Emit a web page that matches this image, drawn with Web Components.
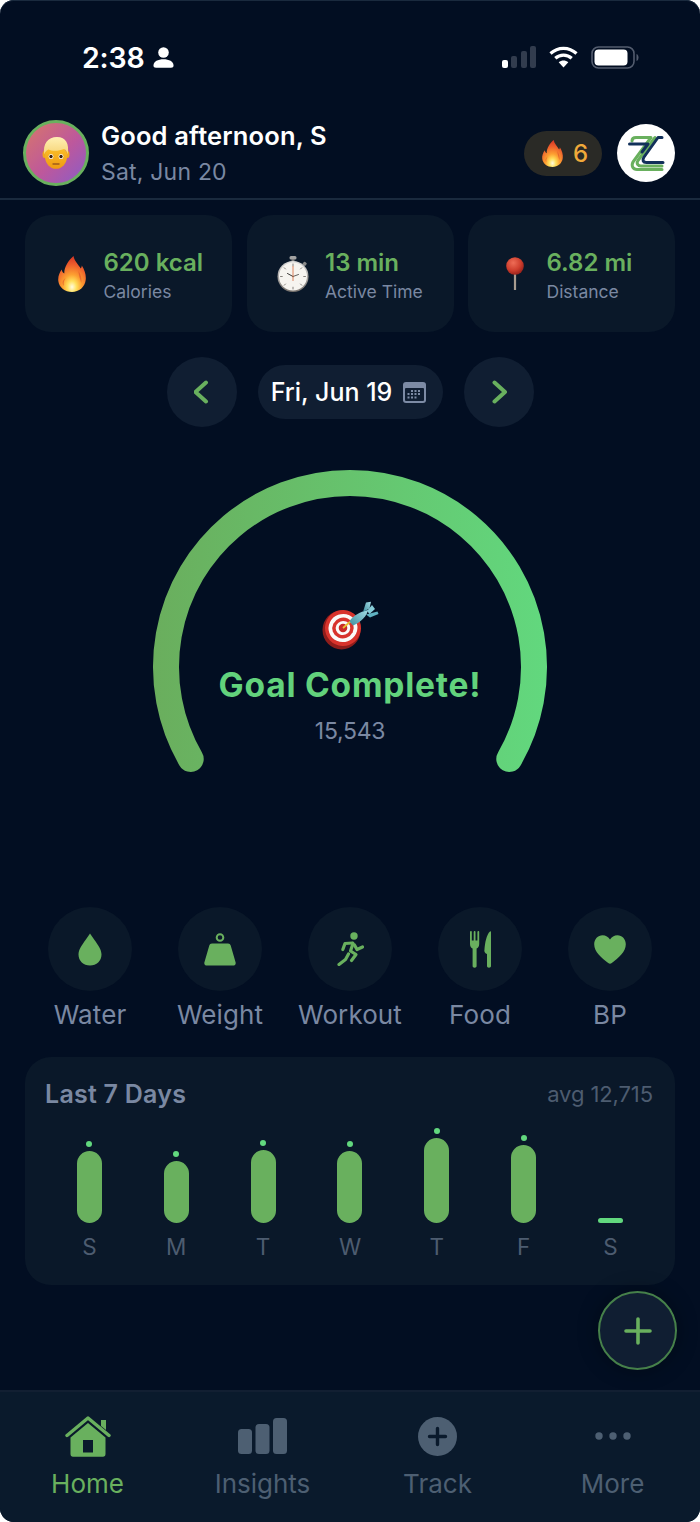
<!DOCTYPE html>
<html lang="en">
<head>
<meta charset="utf-8">
<title>Home</title>
<style>
    html, body { margin: 0; padding: 0; background: #ffffff; }
    body { font-family: "Inter", "Liberation Sans", sans-serif; width: 700px; height: 1522px; overflow: hidden; }
</style>
</head>
<body>
<app-shell>
    <status-bar></status-bar>
    <app-header name="Good afternoon, S" date="Sat, Jun 20" streak="6"></app-header>
    <stat-row>
        <stat-card icon="flame" value="620 kcal" label="Calories"></stat-card>
        <stat-card icon="stopwatch" value="13 min" label="Active Time"></stat-card>
        <stat-card icon="pin" value="6.82 mi" label="Distance"></stat-card>
    </stat-row>
    <date-nav date="Fri, Jun 19"></date-nav>
    <goal-gauge title="Goal Complete!" value="15,543"></goal-gauge>
    <action-row>
        <quick-action icon="water" label="Water"></quick-action>
        <quick-action icon="weight" label="Weight"></quick-action>
        <quick-action icon="workout" label="Workout"></quick-action>
        <quick-action icon="food" label="Food"></quick-action>
        <quick-action icon="heart" label="BP"></quick-action>
    </action-row>
    <week-chart avg="avg 12,715"></week-chart>
    <fab-button></fab-button>
    <bottom-nav>
        <nav-item icon="home" label="Home" active></nav-item>
        <nav-item icon="insights" label="Insights"></nav-item>
        <nav-item icon="track" label="Track"></nav-item>
        <nav-item icon="more" label="More"></nav-item>
    </bottom-nav>
</app-shell>

<script>
// Colour emoji are not installed, so these are drawn by hand
const EMOJI = {
    flame: `<svg viewBox="0 0 28 36" width="100%" height="100%">
        <defs>
            <radialGradient id="fl" cx="50%" cy="86%" r="82%">
                <stop offset="0" stop-color="#fffbe0"/><stop offset=".2" stop-color="#ffe05c"/>
                <stop offset=".42" stop-color="#fda031"/><stop offset=".75" stop-color="#ee5f2c"/><stop offset="1" stop-color="#d93a26"/>
            </radialGradient>
        </defs>
        <path fill="url(#fl)" d="M15.500 0C16.500 5.500 20.500 8.500 22.800 12.500C23.500 11.500 23.800 10.500 23.800 9.500C26.800 14 28.300 19.500 27.700 24C27 31 21 36 14 36C7 36 1 31.500 .3 25C-.2 20.500 1.500 16.500 3.800 13.500C4 15.500 4.800 16.800 6.300 17.500C6 11 10.500 4.500 15.500 0Z"/>
        <path fill="#d8402a" opacity=".5" d="M20.500 15C23 19 24 23 23.300 27C22 23 20.800 19.500 20.500 15ZM7.500 22C5.800 24.500 5.300 27 6 30C3.800 27.500 4.300 24.500 7.500 22Z"/>
    </svg>`,
    stopwatch: `<svg viewBox="0 0 32 36" width="100%" height="100%">
        <defs>
            <linearGradient id="sw" x1="0" y1="0" x2="0" y2="1"><stop offset="0" stop-color="#dedede"/><stop offset="1" stop-color="#77716c"/></linearGradient>
        </defs>
        <rect x="12.500" y="0" width="7" height="3.500" rx="1.500" fill="#a2a2a2"/>
        <rect x="14.500" y="3" width="3" height="3" fill="#808080"/>
        <rect x="26" y="6" width="3.500" height="3.500" rx="1" fill="#8a8a8a" transform="rotate(40 27.700 7.700)"/>
        <circle cx="16" cy="20.500" r="15.500" fill="url(#sw)"/>
        <circle cx="16" cy="20.500" r="14" fill="#f6f4f0"/>
        <g stroke="#6a6560" stroke-width=".8" stroke-linecap="round">
            <path d="M16 8v1.800M16 31.200v1.800M3.500 20.500h1.800M26.700 20.500h1.800M7.200 11.700l1.300 1.300M23.500 28l1.300 1.300M24.800 11.700l-1.300 1.300M8.500 28l-1.300 1.300"/>
        </g>
        <path d="M16 20.500L10.500 17.500" stroke="#3c3a38" stroke-width="1" stroke-linecap="round"/>
        <path d="M16 20.500L21.500 18.500" stroke="#3c3a38" stroke-width=".8" stroke-linecap="round"/>
        <path d="M16 25V10" stroke="#d8683a" stroke-width=".8"/>
    </svg>`,
    pin: `<svg viewBox="0 0 18 33" width="100%" height="100%">
        <defs>
            <radialGradient id="pn" cx="40%" cy="32%" r="70%"><stop offset="0" stop-color="#ee6c56"/><stop offset=".6" stop-color="#cf3f2e"/><stop offset="1" stop-color="#97201a"/></radialGradient>
        </defs>
        <rect x="7.900" y="15" width="2.200" height="18" fill="#a89c90"/>
        <circle cx="9" cy="9" r="8.800" fill="url(#pn)"/>
    </svg>`,
    dart: `<svg viewBox="0 0 57 49" width="100%" height="100%">
        <defs>
            <linearGradient id="dt" x1="0" y1="1" x2="1" y2="0"><stop offset="0" stop-color="#3f8fa0"/><stop offset="1" stop-color="#a4dde6"/></linearGradient>
        </defs>
        <ellipse cx="19.500" cy="29" rx="19" ry="19.500" fill="#8f1d1b"/>
        <ellipse cx="21" cy="27" rx="18" ry="18" fill="#d8332c" transform="rotate(-20 21 27)"/>
        <ellipse cx="21" cy="27" rx="14.500" ry="14" fill="#fbfaf8" transform="rotate(-20 21 27)"/>
        <ellipse cx="21" cy="27" rx="10.800" ry="10.300" fill="#d8332c" transform="rotate(-20 21 27)"/>
        <ellipse cx="21" cy="27" rx="7.300" ry="7" fill="#fbfaf8" transform="rotate(-20 21 27)"/>
        <ellipse cx="21" cy="27" rx="4.300" ry="4.200" fill="#c92a26"/>
        <path d="M21 27L29 20" stroke="#e8c030" stroke-width="1.800"/>
        <path d="M27.500 20.500C30 15 38 11 46 9C45 14.500 40 20.500 31 24.500Z" fill="url(#dt)"/>
        <path d="M41 11L44 1.500L49 .8L47.500 7.500Z" fill="url(#dt)"/>
        <path d="M44 13.500L55.500 10.500L56.500 13L48 16.500Z" fill="#5fb2c2"/>
        <path d="M45 10L50 4L53 8L47.500 13Z" fill="#87cdd9"/>
    </svg>`,
    boy: `<svg viewBox="0 0 28 32" width="100%" height="100%">
        <defs>
            <linearGradient id="by" x1="0" y1="0" x2="0" y2="1"><stop offset="0" stop-color="#fcc52e"/><stop offset="1" stop-color="#ef9a12"/></linearGradient>
            <linearGradient id="hr" x1="0" y1="0" x2="0" y2="1"><stop offset="0" stop-color="#fff0b4"/><stop offset="1" stop-color="#f6d476"/></linearGradient>
        </defs>
        <rect x=".6" y="14" width="4.400" height="7" rx="2.200" fill="#f0a81e"/>
        <rect x="23" y="14" width="4.400" height="7" rx="2.200" fill="#f0a81e"/>
        <ellipse cx="14" cy="19.500" rx="11" ry="12.300" fill="url(#by)"/>
        <path d="M2.300 17.500C.5 7 6 0 15 0C24 0 27.500 7 25.700 17.500C25 14.500 24 13 22 12C16 14.500 9.500 14 6.500 12.500C4.500 13.500 3 15 2.300 17.500Z" fill="url(#hr)"/>
        <ellipse cx="9" cy="19.500" rx="2.400" ry="2.500" fill="#fff"/><ellipse cx="19" cy="19.500" rx="2.400" ry="2.500" fill="#fff"/>
        <circle cx="9" cy="19.500" r="1.700" fill="#3e2410"/><circle cx="19" cy="19.500" r="1.700" fill="#3e2410"/>
        <path d="M11 27h6" stroke="#a05c18" stroke-width="1.300" stroke-linecap="round"/>
    </svg>`
};

const GREEN = '#69b05e';
const MUTED = '#7a88a2';

const ICONS = {
    water: `<svg width="24" height="33" viewBox="0 0 24 33"><path fill="${GREEN}" d="M12 0.500C13 2 14.500 4 16.500 7C20 12 23.500 16.500 23.500 21.500C23.500 28 18.500 32.500 12 32.500C5.500 32.500 .5 28 .5 21.500C.5 16.500 4 12 7.500 7C9.500 4 11 2 12 .5Z"/></svg>`,
    weight: `<svg width="32" height="33" viewBox="0 0 32 33"><circle cx="16" cy="4.500" r="3.300" fill="none" stroke="${GREEN}" stroke-width="2"/><path fill="${GREEN}" d="M8 10.500H24C25.500 10.500 26.300 11.200 26.700 12.500L31.500 29C32.200 31.200 31 32.500 29 32.500H3C1 32.500 -.2 31.200 .5 29L5.300 12.500C5.700 11.200 6.500 10.500 8 10.500Z"/></svg>`,
    workout: `<svg width="27" height="34" viewBox="0 0 27 34"><circle cx="17" cy="4" r="3.700" fill="${GREEN}"/><g fill="none" stroke="${GREEN}" stroke-width="3.200" stroke-linecap="round" stroke-linejoin="round"><path d="M15.500 11L8 11.500L5.800 17.500"/><path d="M16 11.500L13.500 19L19 22.500L14.500 28.500"/><path d="M17.500 13L20 17.500L25.500 15"/><path d="M11.500 22L8.500 27.500L2 32.500"/></g></svg>`,
    food: `<svg width="23" height="37" viewBox="0 0 23 37"><g fill="${GREEN}"><path d="M1 1C1 .4 1.400 0 1.900 0S2.800 .4 2.800 1V9.500H4.700V1C4.700 .4 5.100 0 5.600 0S6.500 .4 6.500 1V9.500H8.400V1C8.400 .4 8.800 0 9.300 0S10.200 .4 10.200 1V13C10.200 15.500 9 17 7.600 17.600V35C7.600 36 6.800 36.700 5.600 36.700S3.600 36 3.600 35V17.600C2.200 17 1 15.500 1 13Z"/><path d="M22 1V35C22 36 21.200 36.700 20 36.700S18 36 18 35V23C15.500 22 15 20.500 15.500 18C16 12 17.500 3.500 21 .5C21.500 0 22 .4 22 1Z"/></g></svg>`,
    heart: `<svg width="32" height="29" viewBox="0 0 32 29"><path fill="${GREEN}" d="M16 28.800C15.400 28.800 14.900 28.500 14.200 28C7.500 23 .2 17 .2 9.300C.2 4 3.900 .2 8.600 .2C11.800 .2 14.400 1.800 16 4.600C17.600 1.800 20.200 .2 23.400 .2C28.100 .2 31.800 4 31.800 9.300C31.800 17 24.500 23 17.800 28C17.100 28.500 16.600 28.800 16 28.800Z"/></svg>`,
    home: `<svg width="46" height="41" viewBox="0 0 46 41"><path fill="none" stroke="currentColor" stroke-width="3.400" stroke-linecap="round" stroke-linejoin="round" d="M2 19.500L23 2L44 19.500"/><path fill="currentColor" d="M36 4H41V14L36 10Z"/><path fill="currentColor" fill-rule="evenodd" d="M23 7L40.500 21.500V38C40.500 39.700 39.500 40.700 38 40.700H8C6.500 40.700 5.500 39.700 5.500 38V21.500ZM18 24V36.500H28V24Z"/></svg>`,
    insights: `<svg width="49" height="36" viewBox="0 0 49 36"><g fill="currentColor"><rect x="0" y="11" width="14" height="25" rx="3.500"/><rect x="17.500" y="6" width="14" height="30" rx="3.500"/><rect x="35" y="0" width="14" height="36" rx="3.500"/></g></svg>`,
    track: `<svg width="39" height="39" viewBox="0 0 39 39"><circle cx="19.500" cy="19.500" r="19.500" fill="currentColor"/><path d="M19.500 11.500V27.500M11.500 19.500H27.500" stroke="#0a1a2c" stroke-width="3.400" stroke-linecap="round"/></svg>`,
    more: `<svg width="36" height="8" viewBox="0 0 36 8"><g fill="currentColor"><circle cx="4" cy="4" r="3.700"/><circle cx="18" cy="4" r="3.700"/><circle cx="32" cy="4" r="3.700"/></g></svg>`
};

class AppShell extends HTMLElement {
    constructor() {
        super();
        this.attachShadow({ mode: 'open' });
        this.shadowRoot.innerHTML = `
            <style>
                :host {
                    display: flex;
                    flex-direction: column;
                    position: relative;
                    width: 700px;
                    height: 1522px;
                    background: #020e22;
                    border-radius: 14px;
                    overflow: hidden;
                    box-shadow: inset 0 1px 0 #1a2a3e;
                    color: #fff;
                }
            </style>
            <slot></slot>
        `;
    }
}

class StatusBar extends HTMLElement {
    constructor() {
        super();
        this.attachShadow({ mode: 'open' });
        this.shadowRoot.innerHTML = `
            <style>
                :host {
                    display: flex;
                    align-items: center;
                    justify-content: space-between;
                    height: 114px;
                    padding: 0 61px 0 82px;
                    box-sizing: border-box;
                }
                .left, .right { display: flex; align-items: center; }
                .left { gap: 9px; }
                .right { gap: 13px; }
                .time { font-size: 28.500px; font-weight: 600; letter-spacing: -.2px; }
                .signal { display: flex; align-items: flex-end; gap: 3.500px; height: 22px; }
                .signal i { display: block; width: 6px; border-radius: 2px; background: #323c4e; }
            </style>
            <div class="left">
                <span class="time">2:38</span>
                <svg width="21" height="21" viewBox="0 0 21 21"><circle cx="10.500" cy="5.500" r="5.300" fill="#fff"/><path fill="#fff" d="M.5 18.500C.5 14.500 5 12.300 10.500 12.300S20.500 14.500 20.500 18.500C20.500 20 19.700 20.700 18 20.700H3C1.300 20.700 .5 20 .5 18.500Z"/></svg>
            </div>
            <div class="right">
                <div class="signal">
                    <i style="height:8px;background:#fff"></i><i style="height:12px"></i><i style="height:17px"></i><i style="height:22px"></i>
                </div>
                <svg width="29" height="22" viewBox="0 0 29 22"><g fill="none" stroke="#fff" stroke-width="3.200"><path d="M1.500 7.500C9 .6 20 .6 27.500 7.500"/><path d="M6.300 12.300C11 8 18 8 22.700 12.300"/></g><path fill="#fff" d="M14.500 21.500L9.700 16.300C12.500 13.800 16.500 13.800 19.300 16.300Z"/></svg>
                <svg width="48" height="23" viewBox="0 0 48 23"><rect x="1" y="1" width="42" height="21" rx="6.500" fill="none" stroke="#535c6e" stroke-width="1.600"/><rect x="3.500" y="3.500" width="33" height="16" rx="4" fill="#fff"/><path d="M45.500 8C47 8.500 47.500 10 47.500 11.500S47 14.500 45.500 15Z" fill="#535c6e"/></svg>
            </div>
        `;
    }
}

class AppHeader extends HTMLElement {
    constructor() {
        super();
        this.attachShadow({ mode: 'open' });
    }

    connectedCallback() {
        this.shadowRoot.innerHTML = `
            <style>
                :host {
                    display: flex;
                    align-items: center;
                    height: 86px;
                    padding: 0 25px 6px 23px;
                    box-sizing: border-box;
                    border-bottom: 2px solid #1a2a3e;
                }
                .avatar {
                    width: 66px;
                    height: 66px;
                    box-sizing: border-box;
                    border: 3px solid #69b05e;
                    border-radius: 50%;
                    background: linear-gradient(135deg, #d8766a 0%, #bd589c 55%, #8a5cc8 100%);
                    display: grid;
                    place-items: center;
                    margin-right: 12px;
                }
                .avatar span { display: block; width: 28px; height: 32px; }
                .text { flex: 1; margin-top: 2px; }
                .name { font-size: 25.500px; font-weight: 600; line-height: 32px; letter-spacing: .15px; white-space: nowrap; }
                .date { font-size: 23px; line-height: 32px; color: ${MUTED}; letter-spacing: .2px; margin-top: 4px; }
                .streak {
                    display: flex;
                    align-items: center;
                    gap: 9px;
                    height: 45px;
                    width: 78px;
                    padding-left: 17px;
                    box-sizing: border-box;
                    border-radius: 23px;
                    background: #2a2a26;
                    color: #f0a93a;
                    font-size: 24px;
                    font-weight: 500;
                    margin-right: 15px;
                }
                .streak span { display: block; width: 23px; height: 27px; }
                .logo {
                    width: 58px;
                    height: 58px;
                    border-radius: 50%;
                    background: #fff;
                    display: grid;
                    place-items: center;
                }
            </style>
            <div class="avatar"><span>${EMOJI.boy}</span></div>
            <div class="text">
                <div class="name">${this.getAttribute('name')}</div>
                <div class="date">${this.getAttribute('date')}</div>
            </div>
            <div class="streak"><span>${EMOJI.flame.replace(/fl\b/g, 'fl2')}</span>${this.getAttribute('streak')}</div>
            <div class="logo">
                <svg width="40" height="40" viewBox="0 0 40 40" fill="none" stroke-linejoin="round" stroke-linecap="round">
                    <path stroke="#69b05e" stroke-width="3" d="M6 8C6 5.500 7.500 4.500 10 4.500H25L7 29C5 33 7 36.500 11 36.500H36"/>
                    <path stroke="#69b05e" stroke-width="3" d="M29 4.500L12 27.500C10 30.500 12 33 15 33H36"/>
                    <path stroke="#12305a" stroke-width="3" d="M3.500 11H22L16 19"/>
                    <path stroke="#12305a" stroke-width="3" d="M36 4.500H32L18 24C16 27 17 29.500 20.500 29.500H37"/>
                </svg>
            </div>
        `;
    }
}

class StatRow extends HTMLElement {
    constructor() {
        super();
        this.attachShadow({ mode: 'open' });
        this.shadowRoot.innerHTML = `
            <style>
                :host {
                    display: grid;
                    grid-template-columns: repeat(3, 207px);
                    justify-content: space-between;
                    padding: 15px 25px 0;
                }
            </style>
            <slot></slot>
        `;
    }
}

const STAT_SIZES = { flame: [28, 36], stopwatch: [32, 36], pin: [18, 33] };

class StatCard extends HTMLElement {
    constructor() {
        super();
        this.attachShadow({ mode: 'open' });
    }

    connectedCallback() {
        const icon = this.getAttribute('icon');
        const [w, h] = STAT_SIZES[icon];
        this.shadowRoot.innerHTML = `
            <style>
                :host {
                    display: flex;
                    align-items: center;
                    gap: 14px;
                    height: 117px;
                    background: #0a1829;
                    border-radius: 26px;
                    padding: 4px 0 0 28.500px;
                    box-sizing: border-box;
                }
                .box { width: 36px; display: grid; place-items: center; margin-top: -4px; }
                .icon { display: block; width: ${w}px; height: ${h}px; }
                .value { font-size: 24px; font-weight: 600; color: #69b05e; line-height: 30px; white-space: nowrap; }
                .label { font-size: 17.500px; color: ${MUTED}; line-height: 24px; margin-top: 2px; white-space: nowrap; }
            </style>
            <div class="box"><span class="icon">${EMOJI[icon]}</span></div>
            <div>
                <div class="value">${this.getAttribute('value')}</div>
                <div class="label">${this.getAttribute('label')}</div>
            </div>
        `;
    }
}

class DateNav extends HTMLElement {
    constructor() {
        super();
        this.attachShadow({ mode: 'open' });
    }

    connectedCallback() {
        this.shadowRoot.innerHTML = `
            <style>
                :host {
                    display: flex;
                    align-items: center;
                    justify-content: center;
                    gap: 21px;
                    padding-top: 25px;
                }
                .arrow {
                    width: 70px;
                    height: 70px;
                    border-radius: 50%;
                    background: #101e32;
                    display: grid;
                    place-items: center;
                }
                .pill {
                    display: flex;
                    align-items: center;
                    justify-content: center;
                    gap: 11px;
                    width: 185px;
                    height: 54px;
                    padding-right: 3px;
                    box-sizing: border-box;
                    border-radius: 27px;
                    background: #101e32;
                    font-size: 25px;
                    font-weight: 500;
                    white-space: nowrap;
                }
            </style>
            <div class="arrow"><svg width="16" height="24" viewBox="0 0 16 24"><path d="M12 2.500L1.500 12L12 21.500" fill="none" stroke="#69b05e" stroke-width="4" stroke-linecap="round" stroke-linejoin="round"/></svg></div>
            <div class="pill">
                ${this.getAttribute('date')}
                <svg width="23" height="21" viewBox="0 0 23 21"><rect width="23" height="21" rx="3" fill="#7d8ba5"/><rect x="2" y="6" width="19" height="13" rx="1" fill="#101e32"/><g fill="#7d8ba5"><path d="M8 8h2v2H8zM11.500 8h2v2h-2zM15 8h2v2h-2zM4.500 11h2v2h-2zM8 11h2v2H8zM11.500 11h2v2h-2zM15 11h2v2h-2zM4.500 14.500h2v2h-2zM8 14.500h2v2H8zM11.500 14.500h2v2h-2z"/></g></svg>
            </div>
            <div class="arrow"><svg width="16" height="24" viewBox="0 0 16 24"><path d="M3.500 2.500L14 12L3.500 21.500" fill="none" stroke="#69b05e" stroke-width="4" stroke-linecap="round" stroke-linejoin="round"/></svg></div>
        `;
    }
}

class GoalGauge extends HTMLElement {
    constructor() {
        super();
        this.attachShadow({ mode: 'open' });
    }

    connectedCallback() {
        this.shadowRoot.innerHTML = `
            <style>
                :host {
                    display: grid;
                    justify-content: center;
                    margin-top: 43px;
                }
                svg.arc, .center { grid-area: 1 / 1; }
                svg.arc { display: block; overflow: visible; }
                .center {
                    display: flex;
                    flex-direction: column;
                    align-items: center;
                    padding-top: 131px;
                }
                .dart { display: block; width: 57px; height: 49px; }
                .title { font-size: 33.500px; font-weight: 700; color: #62d27c; line-height: 40px; margin-top: 15px; letter-spacing: .8px; white-space: nowrap; }
                .value { font-size: 23px; color: ${MUTED}; line-height: 30px; margin-top: 11px; letter-spacing: -.3px; }
            </style>
            <svg class="arc" width="394" height="420" viewBox="0 0 394 420">
                <defs>
                    <linearGradient id="arc" gradientUnits="userSpaceOnUse" x1="0" y1="0" x2="394" y2="0">
                        <stop offset="0" stop-color="#6aae5d"/>
                        <stop offset="1" stop-color="#62d87e"/>
                    </linearGradient>
                </defs>
                <path d="M37.700 289A184 184 0 1 1 356.300 289" fill="none" stroke="url(#arc)" stroke-width="26" stroke-linecap="round"/>
            </svg>
            <div class="center">
                <span class="dart">${EMOJI.dart}</span>
                <div class="title">${this.getAttribute('title')}</div>
                <div class="value">${this.getAttribute('value')}</div>
            </div>
        `;
    }
}

class ActionRow extends HTMLElement {
    constructor() {
        super();
        this.attachShadow({ mode: 'open' });
        this.shadowRoot.innerHTML = `
            <style>
                :host {
                    display: grid;
                    grid-template-columns: repeat(5, 130px);
                    padding: 17px 25px 0;
                }
            </style>
            <slot></slot>
        `;
    }
}

class QuickAction extends HTMLElement {
    constructor() {
        super();
        this.attachShadow({ mode: 'open' });
    }

    connectedCallback() {
        this.shadowRoot.innerHTML = `
            <style>
                :host {
                    display: flex;
                    flex-direction: column;
                    align-items: center;
                    gap: 8px;
                }
                .circle {
                    width: 84px;
                    height: 84px;
                    border-radius: 50%;
                    background: #0a1829;
                    display: grid;
                    place-items: center;
                }
                .label { font-size: 26px; line-height: 32px; color: ${MUTED}; letter-spacing: .1px; white-space: nowrap; }
            </style>
            <div class="circle">${ICONS[this.getAttribute('icon')]}</div>
            <div class="label">${this.getAttribute('label')}</div>
        `;
    }
}

const WEEK = [
    { day: 'S', h: 72 },
    { day: 'M', h: 62 },
    { day: 'T', h: 73 },
    { day: 'W', h: 72 },
    { day: 'T', h: 85 },
    { day: 'F', h: 78 },
    { day: 'S', h: 0 }
];

class WeekChart extends HTMLElement {
    constructor() {
        super();
        this.attachShadow({ mode: 'open' });
    }

    connectedCallback() {
        const cols = WEEK.map((d) => `
            <div class="col">
                <div class="plot">
                    ${d.h ? `<i class="dot"></i><i class="bar" style="height:${d.h}px"></i>` : '<i class="dash"></i>'}
                </div>
                <div class="day">${d.day}</div>
            </div>
        `).join('');
        this.shadowRoot.innerHTML = `
            <style>
                :host {
                    display: block;
                    margin: 26px 25px 0;
                    height: 228px;
                    padding: 20px 21px 0;
                    box-sizing: border-box;
                    background: #0a1829;
                    border-radius: 26px;
                }
                .head { display: flex; justify-content: space-between; align-items: center; height: 34px; }
                .title { font-size: 25px; font-weight: 600; color: ${MUTED}; letter-spacing: .25px; margin-left: -1px; }
                .avg { font-size: 22px; color: #4d5c70; letter-spacing: -.1px; margin-right: 1px; }
                .cols { display: grid; grid-template-columns: repeat(7, 1fr); margin-top: 8px; }
                .col { display: flex; flex-direction: column; align-items: center; }
                .plot { height: 104px; display: flex; flex-direction: column; justify-content: flex-end; align-items: center; }
                .dot { width: 6px; height: 6px; border-radius: 50%; background: #62d87e; margin-bottom: 4px; }
                .bar { width: 25px; border-radius: 12.500px; background: #69b05e; }
                .dash { width: 25px; height: 5.500px; border-radius: 3px; background: #62d87e; }
                .day { font-size: 22.500px; line-height: 30px; color: #4d5c70; margin-top: 9px; }
            </style>
            <div class="head">
                <div class="title">Last 7 Days</div>
                <div class="avg">${this.getAttribute('avg')}</div>
            </div>
            <div class="cols">${cols}</div>
        `;
    }
}

class FabButton extends HTMLElement {
    constructor() {
        super();
        this.attachShadow({ mode: 'open' });
        this.shadowRoot.innerHTML = `
            <style>
                :host {
                    position: absolute;
                    left: 598px;
                    top: 1291px;
                    width: 79px;
                    height: 79px;
                    box-sizing: border-box;
                    border: 2.500px solid #46804a;
                    border-radius: 50%;
                    background: #101e32;
                    display: grid;
                    place-items: center;
                    box-shadow: 0 0 20px rgba(0, 0, 0, .35);
                }
            </style>
            <svg width="28" height="28" viewBox="0 0 28 28"><path d="M14 2V26M2 14H26" stroke="#69b05e" stroke-width="3.600" stroke-linecap="round"/></svg>
        `;
    }
}

class BottomNav extends HTMLElement {
    constructor() {
        super();
        this.attachShadow({ mode: 'open' });
        this.shadowRoot.innerHTML = `
            <style>
                :host {
                    position: absolute;
                    left: 0;
                    right: 0;
                    bottom: 0;
                    height: 132px;
                    box-sizing: border-box;
                    background: #0a1a2c;
                    border-top: 2px solid #121f32;
                    display: grid;
                    grid-template-columns: repeat(4, 175px);
                }
            </style>
            <slot></slot>
        `;
    }
}

class NavItem extends HTMLElement {
    constructor() {
        super();
        this.attachShadow({ mode: 'open' });
    }

    connectedCallback() {
        const color = this.hasAttribute('active') ? '#69b05e' : '#4d5f72';
        this.shadowRoot.innerHTML = `
            <style>
                :host {
                    display: flex;
                    flex-direction: column;
                    align-items: center;
                    color: ${color};
                }
                .icon { height: 42px; margin-top: 23px; display: grid; place-items: center; }
                .label { font-size: 26px; line-height: 32px; margin-top: 11px; }
            </style>
            <div class="icon">${ICONS[this.getAttribute('icon')]}</div>
            <div class="label">${this.getAttribute('label')}</div>
        `;
    }
}

customElements.define('app-shell', AppShell);
customElements.define('status-bar', StatusBar);
customElements.define('app-header', AppHeader);
customElements.define('stat-row', StatRow);
customElements.define('stat-card', StatCard);
customElements.define('date-nav', DateNav);
customElements.define('goal-gauge', GoalGauge);
customElements.define('action-row', ActionRow);
customElements.define('quick-action', QuickAction);
customElements.define('week-chart', WeekChart);
customElements.define('fab-button', FabButton);
customElements.define('bottom-nav', BottomNav);
customElements.define('nav-item', NavItem);
</script>
</body>
</html>
